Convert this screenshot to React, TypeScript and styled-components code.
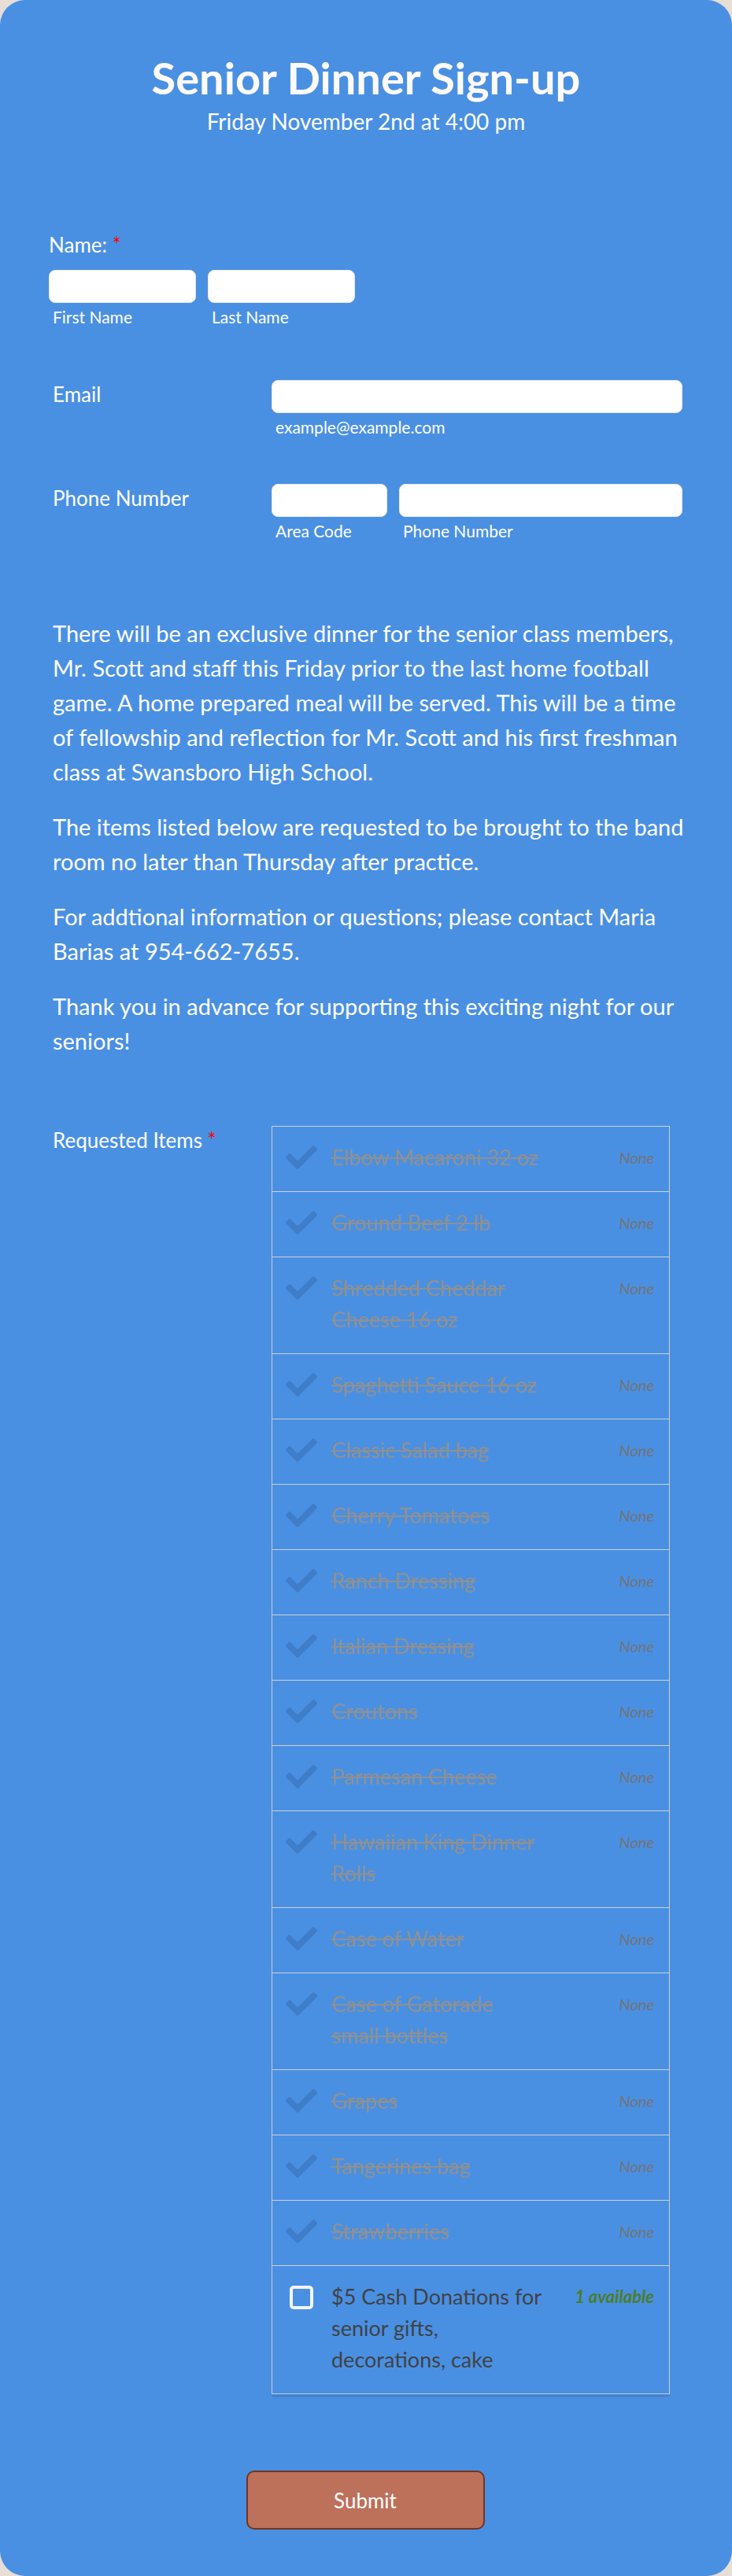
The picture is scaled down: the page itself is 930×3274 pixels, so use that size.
import React from "react";
import styled, { createGlobalStyle } from "styled-components";
import { FaCheck } from "react-icons/fa";

const GlobalStyle = createGlobalStyle`
  html, body { margin: 0; padding: 0; background: #e7ded6; }
  body { font-family: Lato, "Open Sans", sans-serif; }
  * { box-sizing: border-box; }
`;

const Card = styled.main`
  width: 930px;
  background: #4a90e2;
  border-radius: 32px;
  padding: 65px 0 59px;
  color: #fff;
`;

const Header = styled.header`
  text-align: center;
`;

const Title = styled.h1`
  margin: 0;
  font-size: 56px;
  line-height: 67px;
  font-weight: 700;
  color: #fffafa;
`;

const Subtitle = styled.div`
  margin-top: 5px;
  font-size: 28px;
  line-height: 34px;
`;

const Form = styled.form`
  padding: 0 63px 0 62px;
  display: flex;
  flex-direction: column;
`;

const TopField = styled.section`
  margin-top: 125px;
`;

const Label = styled.label<{ $pad?: number }>`
  display: block;
  font-size: 26px;
  line-height: 31px;
  padding-left: ${(p) => p.$pad ?? 0}px;
  padding-top: ${(p) => (p.$pad ? 3 : 0)}px;
`;

const Req = styled.span`
  color: #f00;
`;

const InputRow = styled.div<{ $top?: number }>`
  display: flex;
  gap: 15px;
  margin-top: ${(p) => p.$top ?? 0}px;
`;

const InputCol = styled.div<{ $w?: number }>`
  display: flex;
  flex-direction: column;
  width: ${(p) => (p.$w ? `${p.$w}px` : "auto")};
  flex: ${(p) => (p.$w ? "none" : "1")};
`;

const TextInput = styled.input`
  height: 42px;
  width: 100%;
  border: 1px solid #e4e8ee;
  border-radius: 8px;
  background: #fff;
  font-size: 22px;
  padding: 0 10px;
  font-family: inherit;
`;

const SubLabel = styled.span`
  margin-top: 6px;
  padding-left: 5px;
  font-size: 21px;
  line-height: 24px;
  color: #fff;
`;

const SideField = styled.section<{ $top: number }>`
  display: grid;
  grid-template-columns: 283px 1fr;
  align-items: start;
  margin-top: ${(p) => p.$top}px;
`;

const Text = styled.div`
  margin-top: 96px;
  padding-left: 5px;
  width: 823px;
  display: flex;
  flex-direction: column;
  gap: 26px;
  p {
    margin: 0;
    font-size: 29px;
    line-height: 44px;
  }
`;

const ItemBox = styled.div`
  width: 506px;
  border: 1px solid #cbd0d6;
  border-bottom: none;
  box-shadow: 0 4px 3px -1px rgba(40, 70, 120, 0.25);
`;

const ItemRow = styled.div`
  display: flex;
  align-items: flex-start;
  padding: 19px 19px 23px 17px;
  border-bottom: 1px solid #cbd0d6;
`;

const IconCell = styled.div`
  width: 40px;
  height: 40px;
  flex: none;
  display: flex;
  align-items: center;
  justify-content: center;
  color: #3f7dc8;
`;

const Checkbox = styled.span`
  width: 30px;
  height: 30px;
  border: 4px solid #f3f5f8;
  border-radius: 5px;
  margin-top: 1px;
`;

const ItemName = styled.div<{ $taken: boolean }>`
  flex: 1;
  margin-left: 18px;
  font-size: 27px;
  line-height: 40px;
  color: ${(p) => (p.$taken ? "#8e9093" : "#404245")};
  text-decoration: ${(p) => (p.$taken ? "line-through" : "none")};
`;

const NameLine = styled.span`
  display: block;
  white-space: nowrap;
`;

const Status = styled.div<{ $avail: boolean }>`
  width: 120px;
  flex: none;
  margin-left: 5px;
  text-align: right;
  font-size: ${(p) => (p.$avail ? 22 : 20)}px;
  line-height: 40px;
  font-style: italic;
  font-weight: ${(p) => (p.$avail ? 700 : 400)};
  color: ${(p) => (p.$avail ? "#4b7d2b" : "#717478")};
`;

const ButtonRow = styled.div`
  margin-top: 97px;
  display: flex;
  justify-content: center;
`;

const SubmitButton = styled.button`
  width: 303px;
  height: 75px;
  background: #bd705a;
  border: 2px solid #73341f;
  border-radius: 10px;
  color: #fff;
  font-family: inherit;
  font-size: 26px;
  margin-left: -1px;
`;

const items: { lines: string[]; taken: boolean }[] = [
  { lines: ["Elbow Macaroni 32 oz"], taken: true },
  { lines: ["Ground Beef 2 lb"], taken: true },
  { lines: ["Shredded Cheddar", "Cheese 16 oz"], taken: true },
  { lines: ["Spaghetti Sauce 16 oz"], taken: true },
  { lines: ["Classic Salad bag"], taken: true },
  { lines: ["Cherry Tomatoes"], taken: true },
  { lines: ["Ranch Dressing"], taken: true },
  { lines: ["Italian Dressing"], taken: true },
  { lines: ["Croutons"], taken: true },
  { lines: ["Parmesan Cheese"], taken: true },
  { lines: ["Hawaiian King Dinner", "Rolls"], taken: true },
  { lines: ["Case of Water"], taken: true },
  { lines: ["Case of Gatorade", "small bottles"], taken: true },
  { lines: ["Grapes"], taken: true },
  { lines: ["Tangerines bag"], taken: true },
  { lines: ["Strawberries"], taken: true },
  { lines: ["$5 Cash Donations for", "senior gifts,", "decorations, cake"], taken: false },
];

export default function App() {
  return (
    <>
      <GlobalStyle />
      <Card>
        <Header>
          <Title>Senior Dinner Sign-up</Title>
          <Subtitle>Friday November 2nd at 4:00 pm</Subtitle>
        </Header>
        <Form onSubmit={(e) => e.preventDefault()}>
          <TopField>
            <Label>
              Name: <Req>*</Req>
            </Label>
            <InputRow $top={16}>
              <InputCol $w={187}>
                <TextInput />
                <SubLabel>First Name</SubLabel>
              </InputCol>
              <InputCol $w={187}>
                <TextInput />
                <SubLabel>Last Name</SubLabel>
              </InputCol>
            </InputRow>
          </TopField>

          <SideField $top={68}>
            <Label $pad={5}>Email</Label>
            <InputCol>
              <TextInput />
              <SubLabel>example@example.com</SubLabel>
            </InputCol>
          </SideField>

          <SideField $top={60}>
            <Label $pad={5}>Phone Number</Label>
            <InputRow>
              <InputCol $w={147}>
                <TextInput />
                <SubLabel>Area Code</SubLabel>
              </InputCol>
              <InputCol>
                <TextInput />
                <SubLabel>Phone Number</SubLabel>
              </InputCol>
            </InputRow>
          </SideField>

          <Text>
            <p>
              There will be an exclusive dinner for the senior class members, Mr. Scott and staff
              this Friday prior to the last home football game. A home prepared meal will be
              served. This will be a time of fellowship and reflection for Mr. Scott and his first
              freshman class at Swansboro High School.
            </p>
            <p>
              The items listed below are requested to be brought to the band room no later than
              Thursday after practice.
            </p>
            <p>For addtional information or questions; please contact Maria Barias at 954-662-7655.</p>
            <p>Thank you in advance for supporting this exciting night for our seniors!</p>
          </Text>

          <SideField $top={86}>
            <Label $pad={5}>
              Requested Items <Req>*</Req>
            </Label>
            <ItemBox>
              {items.map((it) => (
                <ItemRow key={it.lines.join(" ")}>
                  <IconCell>{it.taken ? <FaCheck size={40} /> : <Checkbox />}</IconCell>
                  <ItemName $taken={it.taken}>
                    {it.lines.map((l) => (
                      <NameLine key={l}>{l}</NameLine>
                    ))}
                  </ItemName>
                  <Status $avail={!it.taken}>{it.taken ? "None" : "1 available"}</Status>
                </ItemRow>
              ))}
            </ItemBox>
          </SideField>

          <ButtonRow>
            <SubmitButton type="submit">Submit</SubmitButton>
          </ButtonRow>
        </Form>
      </Card>
    </>
  );
}
